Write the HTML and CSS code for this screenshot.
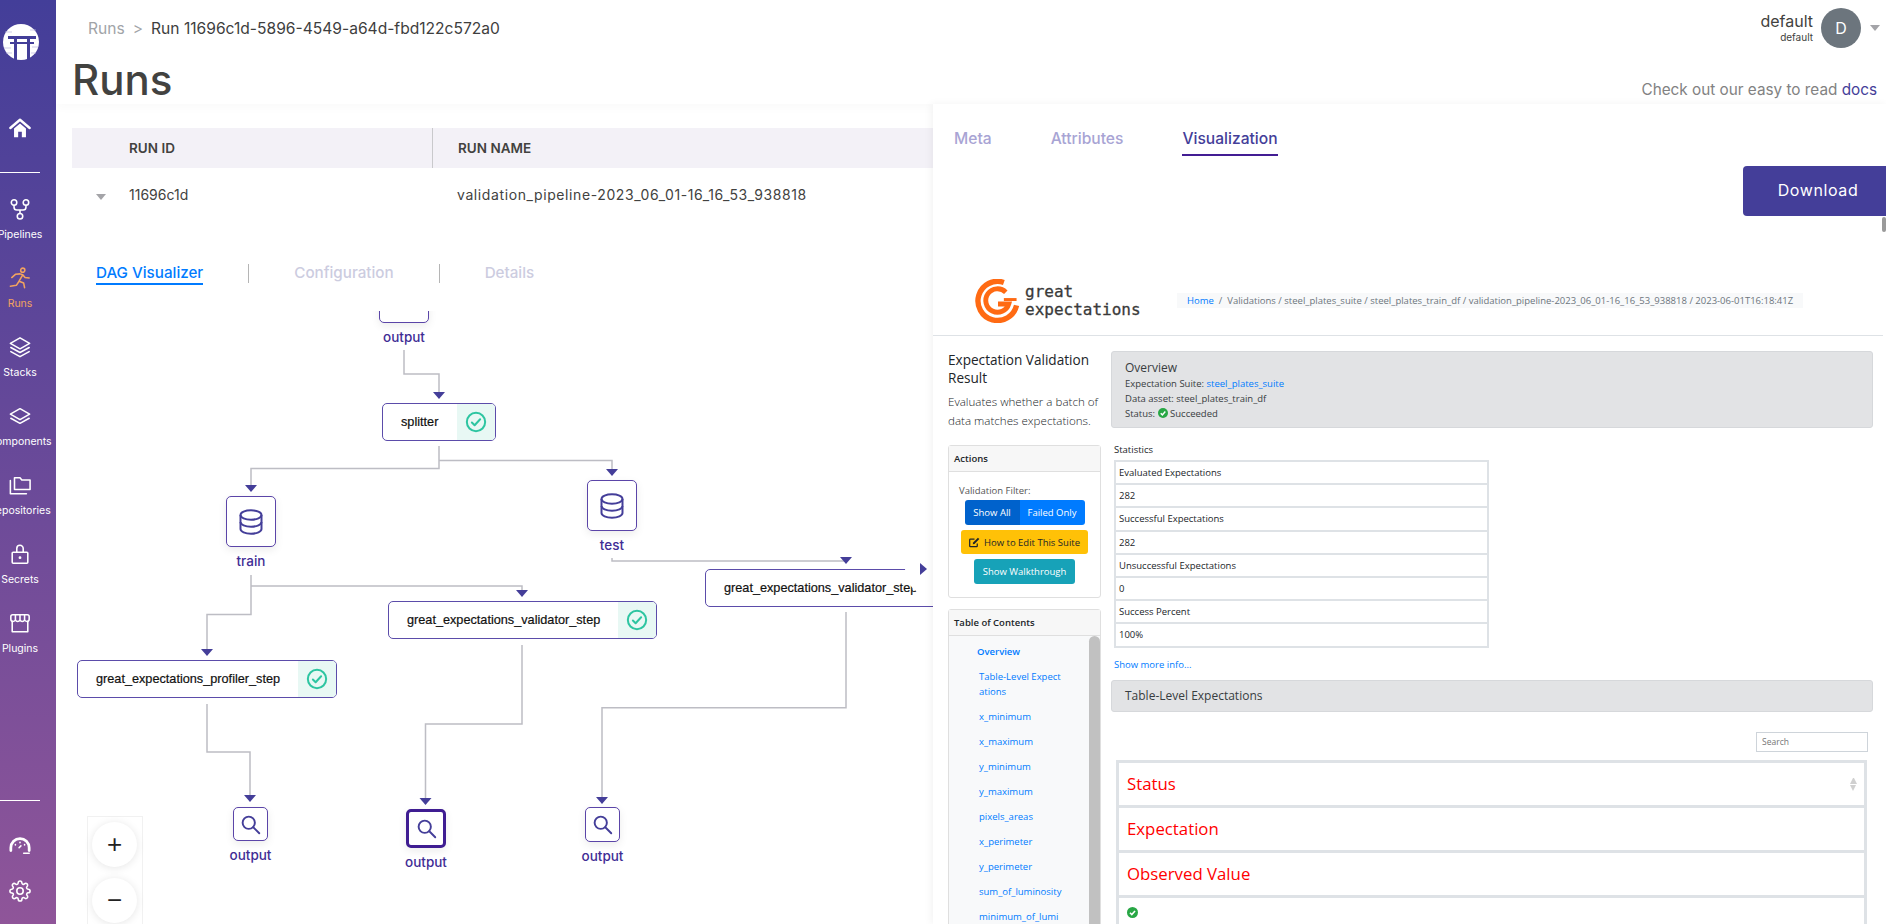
FILE: index.html
```html
<!DOCTYPE html>
<html lang="en">
<head>
    <meta charset="UTF-8">
    <title>Runs</title>
    <link rel="stylesheet" href="styles.css">
</head>
<body>

<svg class="defs" width="0" height="0">
    <symbol id="i-db" viewBox="0 0 24 24"><ellipse cx="12" cy="6" rx="9" ry="4"/><path d="M3 6v12c0 2.2 4 4 9 4s9-1.8 9-4V6"/><path d="M3 12c0 2.2 4 4 9 4s9-1.8 9-4"/></symbol>
    <symbol id="i-search" viewBox="0 0 24 24"><circle cx="10" cy="10" r="7"/><path d="M15.2 15.2 22 22"/></symbol>
    <symbol id="i-check" viewBox="0 0 24 24"><circle cx="12" cy="12" r="10"/><path d="m7.5 12.5 3 3 6-6.5"/></symbol>
    <symbol id="i-ok" viewBox="0 0 24 24"><circle cx="12" cy="12" r="12" fill="#28a745" stroke="none"/><path d="m6.5 12.5 4 4 7-8" fill="none" stroke="#fff" stroke-width="3.4"/></symbol>
</svg>

<div class="app">
    <nav class="sidebar">
        <svg class="logo" viewBox="0 0 36 36">
            <circle cx="18" cy="18" r="18" fill="#fff"/>
            <path d="M5 12h28v3H5zM7 18h24v2H7z" fill="#433e99"/>
            <path d="M11 15h3v21h-3zM24 15h3v21h-3z" fill="#433e99"/>
            <path d="M2 8h7M27 6h6M1 24h7M29 23h6M3 29h6M28 29h5" stroke="#b9b6dc" stroke-width=".7"/>
        </svg>
        <a class="nav-item home">
            <svg class="ico" viewBox="0 0 24 24"><path d="M1.500 12 12 3l10.500 9" stroke-width="2.600"/><path d="M5.500 12.500 12 7l6.500 5.500V22H14v-6h-4v6H5.500z" fill="#fff" stroke="none"/></svg>
        </a>
        <hr class="nav-line first">
        <a class="nav-item">
            <svg class="ico" viewBox="0 0 24 24"><circle cx="5.500" cy="5" r="3"/><circle cx="18.500" cy="5" r="3"/><circle cx="12" cy="20" r="3"/><path d="M5.500 8v2a3 3 0 0 0 3 3h7a3 3 0 0 0 3-3V8M12 13v4"/></svg>
            <span>Pipelines</span>
        </a>
        <a class="nav-item active">
            <svg class="ico" viewBox="0 0 24 24"><circle cx="15" cy="3.500" r="2.300"/><path d="M3 11.500 7 8l5-.5 3 1-4 7 5 2 1 5M15 8.500l2.500 3 4.500.5M11 15.500 8 20l-6.500 1"/></svg>
            <span>Runs</span>
        </a>
        <a class="nav-item">
            <svg class="ico" viewBox="0 0 24 24"><path d="M12 2 22.500 8 12 14 1.500 8z"/><path d="M2 12.500 12 18l10-5.500M2 17l10 5.500L22 17"/></svg>
            <span>Stacks</span>
        </a>
        <a class="nav-item">
            <svg class="ico" viewBox="0 0 24 24"><path d="M12 4 22.500 10 12 16 1.500 10z"/><path d="M2 14.500 12 20l10-5.500"/></svg>
            <span>Components</span>
        </a>
        <a class="nav-item">
            <svg class="ico" viewBox="0 0 24 24"><path d="M6 17V4h6l2 2.500h9V17z"/><path d="M1.500 7v14.500H19"/></svg>
            <span>Repositories</span>
        </a>
        <a class="nav-item">
            <svg class="ico" viewBox="0 0 24 24"><rect x="3.500" y="10" width="17" height="12" rx="1"/><path d="M8.500 10V6a3.500 3.500 0 0 1 7 0v4"/><circle cx="12" cy="16" r=".7"/></svg>
            <span>Secrets</span>
        </a>
        <a class="nav-item">
            <svg class="ico" viewBox="0 0 24 24"><path d="M3.500 10v11.500h17V10"/><path d="M2 8V5a2 2 0 0 1 2-2h16a2 2 0 0 1 2 2v3c0 3-4 3-5 .5-1 2.500-4 2.500-5 0-1 2.500-4 2.500-5 0C6 11 2 11 2 8zM7 3v5M12 3v5M17 3v5"/></svg>
            <span>Plugins</span>
        </a>
        <hr class="nav-line second">
        <a class="nav-item small gauge">
            <svg class="ico" viewBox="0 0 24 24"><path d="M2 18v-3a10 10 0 0 1 20 0v3" stroke-width="3"/><path d="M16 21h6M12 9v.5M7 11.500v.5M17 11.500v.5M11 15l2-2"/></svg>
        </a>
        <a class="nav-item small">
            <svg class="ico" viewBox="0 0 24 24"><circle cx="12" cy="12" r="3.500"/><path d="M19.400 15a1.650 1.650 0 0 0 .33 1.820l.06.06a2 2 0 0 1 0 2.830 2 2 0 0 1-2.830 0l-.06-.06a1.650 1.650 0 0 0-1.820-.33 1.650 1.650 0 0 0-1 1.510V21a2 2 0 0 1-2 2 2 2 0 0 1-2-2v-.09A1.650 1.650 0 0 0 9 19.400a1.650 1.650 0 0 0-1.820.33l-.06.06a2 2 0 0 1-2.830 0 2 2 0 0 1 0-2.830l.06-.06a1.650 1.650 0 0 0 .33-1.820 1.650 1.650 0 0 0-1.510-1H3a2 2 0 0 1-2-2 2 2 0 0 1 2-2h.09A1.650 1.650 0 0 0 4.600 9a1.650 1.650 0 0 0-.33-1.820l-.06-.06a2 2 0 0 1 0-2.830 2 2 0 0 1 2.830 0l.06.06a1.650 1.650 0 0 0 1.820.33H9a1.650 1.650 0 0 0 1-1.510V3a2 2 0 0 1 2-2 2 2 0 0 1 2 2v.09a1.650 1.650 0 0 0 1 1.510 1.650 1.650 0 0 0 1.820-.33l.06-.06a2 2 0 0 1 2.830 0 2 2 0 0 1 0 2.830l-.06.06a1.650 1.650 0 0 0-.33 1.820V9a1.650 1.650 0 0 0 1.510 1H21a2 2 0 0 1 2 2 2 2 0 0 1-2 2h-.09a1.650 1.650 0 0 0-1.510 1z"/></svg>
        </a>
    </nav>

    <main class="main">
        <header class="topbar">
            <div class="crumbs">
                <span class="crumb-link">Runs</span>
                <span class="crumb-sep">&gt;</span>
                <span>Run 11696c1d-5896-4549-a64d-fbd122c572a0</span>
            </div>
            <div class="user">
                <div class="user-names">
                    <div>default</div>
                    <div class="user-sub">default</div>
                </div>
                <div class="avatar">D</div>
                <div class="caret-down"></div>
            </div>
        </header>

        <div class="title-row">
            <h1>Runs</h1>
            <p class="docs">Check out our easy to read <a>docs</a></p>
        </div>

        <div class="run-table">
            <div class="run-head">
                <div class="run-id-col">RUN ID</div>
                <div class="run-name-col">RUN NAME</div>
            </div>
            <div class="run-row">
                <div class="run-id-col"><span class="caret-down row-caret"></span>11696c1d</div>
                <div class="run-name-col">validation_pipeline-2023_06_01-16_16_53_938818</div>
            </div>
        </div>

        <div class="dag-tabs">
            <a class="dag-tab current">DAG Visualizer</a>
            <span class="tab-div"></span>
            <a class="dag-tab">Configuration</a>
            <span class="tab-div"></span>
            <a class="dag-tab">Details</a>
        </div>

        <!-- diagram: coordinates are relative to this canvas -->
        <section class="dag">
            <svg class="edges" width="900" height="620">
                <path d="M348 39V63H383V81M383 135V157.500H195V174M383 149.500H556V158M195 264V303.500H151V338M195 275H466V280M151 393V441H194V485M556 247V250H790M466 334V413H369.500V487M790 301V396.700H546V486"/>
                <polygon points="377,81 389,81 383,88"/>
                <polygon points="189,174 201,174 195,181"/>
                <polygon points="550,158 562,158 556,165"/>
                <polygon points="145,338 157,338 151,345"/>
                <polygon points="460,279 472,279 466,286"/>
                <polygon points="188,484 200,484 194,491"/>
                <polygon points="784,246 796,246 790,253"/>
                <polygon points="363.500,487 375.500,487 369.500,494"/>
                <polygon points="540,486 552,486 546,493"/>
            </svg>

            <div class="artifact a-top"><div class="art-box"></div><div class="art-label">output</div></div>

            <div class="step s-splitter"><div class="step-name">splitter</div><div class="step-ok"><svg class="check"><use href="#i-check"/></svg></div></div>

            <div class="artifact a-train"><div class="art-box"><svg class="db"><use href="#i-db"/></svg></div><div class="art-label">train</div></div>
            <div class="artifact a-test"><div class="art-box"><svg class="db"><use href="#i-db"/></svg></div><div class="art-label">test</div></div>

            <div class="step s-profiler"><div class="step-name">great_expectations_profiler_step</div><div class="step-ok"><svg class="check"><use href="#i-check"/></svg></div></div>
            <div class="step s-val1"><div class="step-name">great_expectations_validator_step</div><div class="step-ok"><svg class="check"><use href="#i-check"/></svg></div></div>
            <div class="step s-val2"><div class="step-name">great_expectations_validator_step</div><div class="step-ok"><svg class="check"><use href="#i-check"/></svg></div></div>

            <div class="artifact a-out1"><div class="art-box"><svg class="lens"><use href="#i-search"/></svg></div><div class="art-label">output</div></div>
            <div class="artifact a-out2 selected"><div class="art-box"><svg class="lens"><use href="#i-search"/></svg></div><div class="art-label">output</div></div>
            <div class="artifact a-out3"><div class="art-box"><svg class="lens"><use href="#i-search"/></svg></div><div class="art-label">output</div></div>

            <div class="zoom-box">
                <button class="zoom-btn">+</button>
                <button class="zoom-btn">&minus;</button>
            </div>
        </section>
    </main>

    <div class="panel-toggle"><span class="caret-right"></span></div>

    <aside class="panel">
        <div class="panel-tabs">
            <a>Meta</a>
            <a>Attributes</a>
            <a class="current">Visualization</a>
        </div>
        <div class="panel-actions"><button class="download">Download</button></div>
        <div class="thumb"></div>

        <div class="report">
            <div class="ge-nav">
                <svg class="ge-mark" viewBox="0 0 45 45" fill="none" stroke="#ff6a13">
                    <path d="M29 3.500A20 20 0 1 0 42 27" stroke-width="5.500"/>
                    <path d="M31 13.500A12 12 0 1 0 34 25.500H23" stroke-width="5"/>
                    <path d="M42 21H29" stroke-width="3"/>
                </svg>
                <div class="ge-word">great<br>expectations</div>
                <div class="ge-crumbs"><a>Home</a> &nbsp;/&nbsp; Validations / steel_plates_suite / steel_plates_train_df / validation_pipeline-2023_06_01-16_16_53_938818 / 2023-06-01T16:18:41Z</div>
            </div>

            <div class="ge-body">
                <div class="ge-left">
                    <h2>Expectation Validation Result</h2>
                    <p class="ge-lead">Evaluates whether a batch of data matches expectations.</p>

                    <div class="card actions">
                        <div class="card-head">Actions</div>
                        <div class="actions-body">
                            <div class="filter-label">Validation Filter:</div>
                            <div class="btn-group">
                                <span class="btn show-all">Show All</span>
                                <span class="btn failed">Failed Only</span>
                            </div>
                            <span class="btn edit">
                                <svg class="edit-ico" viewBox="0 0 16 16"><path d="M12 9.500V13a1 1 0 0 1-1 1H2a1 1 0 0 1-1-1V4a1 1 0 0 1 1-1h6" fill="none" stroke="#212529" stroke-width="1.800"/><path d="M6 8 13 1l2 2-7 7-2.500.5z" fill="#212529"/></svg>
                                How to Edit This Suite
                            </span>
                            <span class="btn walk">Show Walkthrough</span>
                        </div>
                    </div>

                    <div class="card toc">
                        <div class="card-head">Table of Contents</div>
                        <div class="toc-body">
                            <ul>
                                <li class="on">Overview</li>
                                <li>Table-Level Expect<br>ations</li>
                                <li>x_minimum</li>
                                <li>x_maximum</li>
                                <li>y_minimum</li>
                                <li>y_maximum</li>
                                <li>pixels_areas</li>
                                <li>x_perimeter</li>
                                <li>y_perimeter</li>
                                <li>sum_of_luminosity</li>
                                <li>minimum_of_lumi<br>nosity</li>
                            </ul>
                            <div class="toc-thumb"></div>
                        </div>
                    </div>
                </div>

                <div class="ge-main">
                    <div class="alert">
                        <div class="alert-title">Overview</div>
                        <div>Expectation Suite: <a>steel_plates_suite</a></div>
                        <div>Data asset: steel_plates_train_df</div>
                        <div>Status: <svg class="ok"><use href="#i-ok"/></svg> Succeeded</div>
                    </div>

                    <div class="stats-title">Statistics</div>
                    <table class="stats">
                        <tr><td>Evaluated Expectations</td></tr>
                        <tr><td>282</td></tr>
                        <tr><td>Successful Expectations</td></tr>
                        <tr><td>282</td></tr>
                        <tr><td>Unsuccessful Expectations</td></tr>
                        <tr><td>0</td></tr>
                        <tr><td>Success Percent</td></tr>
                        <tr><td>100%</td></tr>
                    </table>
                    <a class="more">Show more info...</a>

                    <div class="section-bar">Table-Level Expectations</div>

                    <div class="search-row"><input class="search" placeholder="Search"></div>

                    <table class="results">
                        <tr><th>Status<span class="sort"></span></th></tr>
                        <tr><th>Expectation</th></tr>
                        <tr><th>Observed Value</th></tr>
                        <tr><td><svg class="ok"><use href="#i-ok"/></svg></td></tr>
                    </table>
                </div>
            </div>
        </div>
    </aside>
</div>

</body>
</html>
```

FILE: styles.css
```css
* {
    box-sizing: border-box;
}
html, body {
    margin: 0;
    height: 100%;
    overflow: hidden;
}
body {
    font-family: Inter, Roboto, sans-serif;
    color: #424240;
    background-color: white;
}
a {
    cursor: pointer;
}
.defs {
    position: absolute;
}
.app {
    display: flex;
    height: 924px;
    position: relative;
    overflow: hidden;
}

/* sidebar */
.sidebar {
    width: 56px;
    flex: none;
    padding-right: 16px;
    padding-top: 24px;
    display: flex;
    flex-direction: column;
    align-items: center;
    background: linear-gradient(180deg, #433e99 0%, #8f5599 100%);
    color: white;
    overflow: hidden;
}
.logo {
    width: 36px;
    height: 36px;
    flex: none;
    margin-left: 2px;
}
.nav-item {
    width: 40px;
    height: 69px;
    flex: none;
    display: flex;
    flex-direction: column;
    align-items: center;
    font-size: 10.500px;
    line-height: 14px;
    white-space: nowrap;
}
.nav-item span {
    margin-top: 8px;
}
.ico {
    width: 22px;
    height: 22px;
    flex: none;
    fill: none;
    stroke: currentColor;
    stroke-width: 1.700;
    stroke-linejoin: round;
    stroke-linecap: round;
}
.nav-item.home {
    height: auto;
    margin-top: 57px;
}
.nav-item.active {
    color: #f2a35f;
}
.nav-line {
    width: 40px;
    height: 1px;
    margin: 0;
    border: none;
    background-color: white;
    flex: none;
}
.nav-line.first {
    margin-top: 33px;
    margin-bottom: 25px;
}
.nav-line.second {
    margin-top: 119px;
}
.nav-item.small {
    height: auto;
    margin-top: 33px;
}
.nav-item.small + .nav-item.small {
    margin-top: 24px;
}

/* top of the page */
.main {
    flex: 1;
    min-width: 0;
    display: flex;
    flex-direction: column;
}
.topbar {
    height: 56px;
    flex: none;
    display: flex;
    justify-content: space-between;
    padding: 8px 6px 0 32px;
}
.crumbs {
    display: flex;
    align-items: center;
    height: 40px;
    font-size: 15.600px;
    color: #3e3e3e;
}
.crumb-link {
    color: #a1a4a8;
}
.crumb-sep {
    color: #a1a4a8;
    margin: 0 8px;
}
.user {
    display: flex;
    align-items: center;
    height: 40px;
}
.user-names {
    text-align: right;
    font-size: 16px;
    line-height: 18px;
    margin-right: 8px;
}
.user-sub {
    font-size: 10px;
    line-height: 14px;
}
.avatar {
    width: 40px;
    height: 40px;
    border-radius: 50%;
    background-color: #6c757d;
    color: white;
    font-size: 16px;
    line-height: 40px;
    text-align: center;
}
.caret-down {
    width: 0;
    height: 0;
    border-left: 5px solid transparent;
    border-right: 5px solid transparent;
    border-top: 6px solid #a4a4a8;
    margin-left: 9px;
}
.title-row {
    height: 48px;
    flex: none;
    display: flex;
    justify-content: space-between;
    align-items: flex-end;
    padding: 0 9px 0 16px;
    box-shadow: 0 5px 8px rgba(0, 0, 0, 0.02);
}
h1 {
    margin: 0;
    font-size: 42px;
    line-height: 48px;
    font-weight: 500;
}
.docs {
    margin: 0;
    font-size: 15.300px;
    line-height: 20px;
    margin-bottom: 4px;
    color: #828282;
}
.docs a {
    color: #443e99;
}

/* run table */
.run-table {
    margin: 24px 0 0 16px;
    font-size: 14px;
}
.run-head, .run-row {
    display: grid;
    grid-template-columns: 360px 1fr;
}
.run-head {
    height: 40px;
    background-color: #f3f1f7;
    font-size: 13.500px;
    font-weight: 600;
    line-height: 40px;
}
.run-head .run-name-col {
    border-left: 1px solid #c9c9cc;
}
.run-row {
    height: 54px;
    line-height: 54px;
}
.run-row .run-name-col {
    letter-spacing: 0.6px;
}
.run-id-col {
    padding-left: 57px;
    position: relative;
}
.run-name-col {
    padding-left: 25px;
}
.row-caret {
    position: absolute;
    left: 24px;
    top: 26px;
    margin: 0;
}

/* tabs over the diagram */
.dag-tabs {
    height: 21px;
    margin: 42px 0 26px 40px;
    display: flex;
    flex: none;
    font-size: 15.200px;
    font-weight: 500;
    color: #ccccdf;
}
.dag-tab {
    height: 21px;
    line-height: 18px;
}
.dag-tab.current {
    color: #007bff;
    border-bottom: 2px solid #007bff;
}
.tab-div {
    width: 1px;
    height: 19px;
    margin: 0 45px;
    background-color: #b5b5b5;
}

/* diagram */
.dag {
    flex: 1;
    position: relative;
    overflow: hidden;
}
.edges {
    position: absolute;
    left: 0;
    top: 0;
}
.edges path {
    fill: none;
    stroke: #bdbdc4;
    stroke-width: 1.500;
}
.edges polygon {
    fill: #443e99;
}
.artifact {
    position: absolute;
    display: flex;
    flex-direction: column;
    align-items: center;
}
.art-box {
    width: 100%;
    flex: 1;
    display: flex;
    align-items: center;
    justify-content: center;
    background-color: white;
    border: 1.500px solid #5b45a8;
    border-radius: 5px;
    box-shadow: 0 3px 8px rgba(0, 0, 0, 0.08);
}
.art-label {
    position: absolute;
    top: 100%;
    margin-top: 4px;
    font-size: 13.500px;
    line-height: 20px;
    font-weight: 500;
    color: #3f2d95;
}
.a-top { left: 323px; top: -39px; width: 50px; height: 51px; }
.a-train { left: 170px; top: 185px; width: 50px; height: 51px; }
.a-test { left: 531px; top: 169px; width: 50px; height: 51px; }
.a-out1 { left: 177px; top: 496px; width: 35px; height: 34px; }
.a-out2 { left: 350px; top: 498px; width: 40px; height: 39px; }
.a-out3 { left: 529px; top: 496px; width: 35px; height: 35px; }
.selected .art-box {
    border: 3px solid #3f1d92;
}
.db {
    width: 28px;
    height: 28px;
    fill: none;
    stroke: #443e99;
    stroke-width: 1.700;
}
.lens {
    width: 21px;
    height: 21px;
    fill: none;
    stroke: #443e99;
    stroke-width: 2.200;
    stroke-linecap: round;
}
.step {
    position: absolute;
    height: 38px;
    display: flex;
    justify-content: space-between;
    background-color: white;
    border: 1.500px solid #5b4caa;
    border-radius: 5px;
    overflow: hidden;
}
.step-name {
    padding-left: 18px;
    font-family: "Liberation Sans", Arial, sans-serif;
    font-size: 12.700px;
    line-height: 37px;
    color: #111;
    white-space: nowrap;
    -webkit-text-stroke: 0.200px #111;
}
.step-ok {
    width: 38px;
    flex: none;
    display: flex;
    align-items: center;
    justify-content: center;
    background-color: #e8f8f4;
}
.check {
    width: 22px;
    height: 22px;
    fill: none;
    stroke: #2dc5a1;
    stroke-width: 2.200;
    stroke-linecap: round;
    stroke-linejoin: round;
}
.s-splitter { left: 326px; top: 92px; width: 114px; }
.s-profiler { left: 21px; top: 349px; width: 260px; }
.s-val1 { left: 332px; top: 290px; width: 269px; }
.s-val2 { left: 649px; top: 258px; width: 269px; }
.zoom-box {
    position: absolute;
    left: 31px;
    top: 505px;
    width: 56px;
    height: 130px;
    background-color: white;
    border: 1px solid #f1f1f1;
    padding: 5px 4px;
}
.zoom-btn {
    display: block;
    width: 45px;
    height: 45px;
    margin-bottom: 11px;
    padding: 0;
    border: none;
    border-radius: 50%;
    background-color: white;
    box-shadow: 0 1px 8px rgba(0, 0, 0, 0.1);
    font-family: "Liberation Sans", Arial, sans-serif;
    font-size: 26px;
    line-height: 45px;
    color: #222;
}

/* details panel */
.panel-toggle {
    position: absolute;
    left: 905px;
    top: 541px;
    width: 56px;
    height: 56px;
    border-radius: 50%;
    background-color: white;
    display: flex;
    align-items: center;
    padding-left: 15px;
}
.caret-right {
    width: 0;
    height: 0;
    border-top: 6px solid transparent;
    border-bottom: 6px solid transparent;
    border-left: 7px solid #443e99;
}
.panel {
    position: absolute;
    left: 933px;
    top: 104px;
    right: 0;
    bottom: 0;
    display: flex;
    flex-direction: column;
    background-color: white;
    box-shadow: -2px 0 8px rgba(0, 0, 0, 0.05);
}
.panel-tabs {
    display: flex;
    gap: 59px;
    padding: 24px 0 0 21px;
    flex: none;
    font-size: 15.600px;
    font-weight: 500;
    color: #a8a4d4;
}
.panel-tabs a {
    height: 28px;
    line-height: 22px;
}
.panel-tabs .current {
    color: #443e99;
    border-bottom: 2px solid #431d93;
}
.panel-actions {
    display: flex;
    justify-content: flex-end;
    margin-top: 10px;
    flex: none;
}
.download {
    width: 143px;
    height: 50px;
    border: none;
    border-radius: 4px 0 0 4px;
    background-color: #443e99;
    color: white;
    font-family: inherit;
    font-size: 16px;
    letter-spacing: 0.6px;
    padding: 0 0 2px 7px;
}
.thumb {
    position: absolute;
    right: 0;
    top: 113px;
    width: 4px;
    height: 15px;
    border-radius: 2px;
    background-color: #9a9a9a;
}

/* the embedded report */
.report {
    flex: 1;
    min-height: 0;
    overflow: hidden;
    margin-top: 6px;
    margin-right: 3px;
    font-family: "Open Sans", sans-serif;
    font-size: 9.500px;
    color: #212529;
}
.ge-nav {
    height: 114px;
    padding: 57px 0 13px 42px;
    display: flex;
    align-items: center;
    border-bottom: 1px solid #dee2e6;
}
.ge-mark {
    width: 45px;
    height: 44px;
    flex: none;
}
.ge-word {
    width: 152px;
    margin-left: 5px;
    font-family: "DejaVu Sans Mono", monospace;
    font-size: 16px;
    line-height: 18px;
    color: #3a3a3a;
    flex: none;
    -webkit-text-stroke: 0.300px #3a3a3a;
}
.ge-crumbs {
    height: 15px;
    padding: 0 10px;
    line-height: 15px;
    background-color: #f8f9fa;
    color: #6c757d;
    white-space: nowrap;
}
.ge-crumbs a, .more, .alert a {
    color: #007bff;
}
.ge-body {
    display: grid;
    grid-template-columns: 153px 1fr;
    column-gap: 10px;
    padding: 15px 10px 0 15px;
}
h2 {
    margin: 0;
    font-size: 13.600px;
    line-height: 18px;
    font-weight: 500;
}
.ge-lead {
    margin: 5px 0 15px;
    font-size: 11.600px;
    line-height: 19px;
    font-weight: 300;
}
.card {
    border: 1px solid #dfdfdf;
    border-radius: 3px;
}
.card-head {
    height: 26px;
    padding-left: 5px;
    line-height: 25px;
    font-weight: 600;
    background-color: #f7f7f7;
    border-bottom: 1px solid #dfdfdf;
}
.actions {
    height: 153px;
}
.actions-body {
    display: flex;
    flex-direction: column;
    align-items: center;
    padding-top: 12px;
}
.filter-label {
    align-self: flex-start;
    padding-left: 10px;
    line-height: 14px;
    color: #555;
}
.btn-group {
    display: flex;
    margin-top: 2px;
    height: 25px;
}
.btn {
    display: flex;
    align-items: center;
    justify-content: center;
    color: white;
    border-radius: 3px;
    white-space: nowrap;
}
.show-all {
    width: 55px;
    background-color: #0062cc;
    border-radius: 3px 0 0 3px;
}
.failed {
    width: 65px;
    background-color: #007bff;
    border-radius: 0 3px 3px 0;
}
.edit {
    width: 127px;
    height: 24px;
    margin-top: 5px;
    background-color: #ffc107;
    color: #212529;
}
.edit-ico {
    width: 11px;
    height: 11px;
    margin-right: 4px;
}
.walk {
    width: 101px;
    height: 25px;
    margin-top: 5px;
    background-color: #17a2b8;
}
.toc {
    margin-top: 11px;
    height: 320px;
}
.toc-body {
    position: relative;
    height: 294px;
    background-color: #f8f9fa;
    overflow: hidden;
}
.toc ul {
    margin: 0;
    padding: 8px 0 0 30px;
    list-style: none;
    color: #007bff;
}
.toc li {
    margin-bottom: 10px;
    line-height: 15px;
    white-space: nowrap;
}
.toc li.on {
    margin-left: -2px;
    font-weight: 600;
}
.toc-thumb {
    position: absolute;
    right: 0;
    top: 0;
    width: 11px;
    height: 100%;
    border-radius: 6px 6px 0 0;
    background-color: #c1c1c1;
}
.alert {
    height: 77px;
    padding: 8px 13px;
    background-color: #e2e3e5;
    border: 1px solid #d6d8db;
    border-radius: 3px;
    line-height: 15px;
    color: #383d41;
}
.alert-title {
    font-size: 12px;
    line-height: 16px;
}
.ok {
    width: 10px;
    height: 10px;
    vertical-align: -1px;
}
.stats-title {
    margin: 15px 0 3px 3px;
    line-height: 14px;
    font-weight: 500;
}
table {
    border-collapse: collapse;
    background-color: white;
}
.stats {
    width: 375px;
    margin-left: 3px;
}
.stats td {
    height: 23.200px;
    padding: 0 3px;
    border: 2px solid #dee2e6;
}
.more {
    display: block;
    margin: 10px 0 0 3px;
    line-height: 14px;
}
.section-bar {
    height: 32px;
    margin-top: 8px;
    padding-left: 13px;
    background-color: #e2e3e5;
    border: 1px solid #d6d8db;
    border-radius: 3px;
    font-size: 12px;
    line-height: 29px;
    color: #383d41;
}
.search-row {
    display: flex;
    justify-content: flex-end;
    margin: 20px 5px 8px 0;
}
.search {
    width: 112px;
    height: 20px;
    padding: 0 5px;
    border: 1px solid #ced4da;
    font-family: inherit;
    font-size: 8.500px;
}
.results {
    width: 751px;
    margin-left: 5px;
}
.results th, .results td {
    height: 45px;
    padding: 0 8px;
    border: 3px solid #dee2e6;
    text-align: left;
    position: relative;
}
.results th {
    font-size: 16.800px;
    font-weight: 400;
    color: #ff0000;
}
.results td {
    vertical-align: top;
    padding-top: 9px;
}
.results .ok {
    width: 11px;
    height: 11px;
}
.sort {
    position: absolute;
    right: 7px;
    top: 15px;
    width: 7px;
    height: 6px;
    border-left: 3.500px solid transparent;
    border-right: 3.500px solid transparent;
    border-bottom: 6px solid #d0d0d0;
}
.sort::after {
    content: "";
    position: absolute;
    left: -3.500px;
    top: 7px;
    border-left: 3.500px solid transparent;
    border-right: 3.500px solid transparent;
    border-top: 6px solid #d0d0d0;
}
```
